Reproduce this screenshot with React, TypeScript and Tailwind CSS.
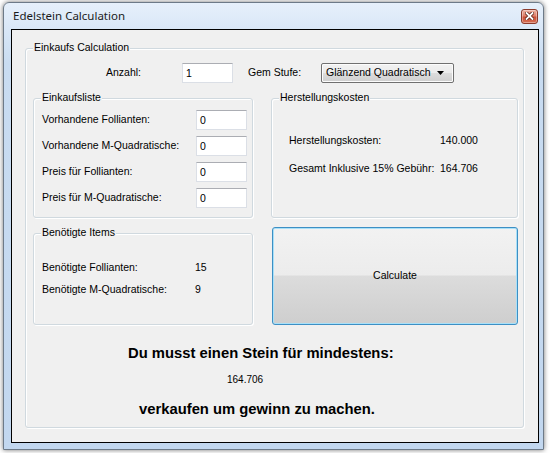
import React from "react";

function Group({
  title,
  className = "",
  children,
}: {
  title: string;
  className?: string;
  children?: React.ReactNode;
}) {
  return (
    <div
      className={`relative rounded-[3px] border border-[#d0d9df] shadow-[inset_1px_1px_0_#ffffff,1px_1px_0_#ffffff] ${className}`}
    >
      <span className="absolute left-[7px] top-[-8px] bg-[#f0f0f0] px-[1px] text-[10.5px] leading-[13px] text-black">
        {title}
      </span>
      {children}
    </div>
  );
}

function TextBox({ value, className = "" }: { value: string; className?: string }) {
  return (
    <div
      className={`h-[20px] border border-[#dbdfe6] border-t-[#abadb3] bg-white pl-[3px] text-[10.5px] leading-[18px] text-black ${className}`}
    >
      {value}
    </div>
  );
}

function CloseButton() {
  return (
    <div className="mr-[5px] flex h-[15px] w-[17px] items-center justify-center rounded-[3px] border border-[#8b3a2b] bg-[linear-gradient(to_bottom,#eeb2a2_0%,#df806a_45%,#cc4f36_55%,#d66f55_100%)] shadow-[inset_0_0_0_1px_rgba(255,255,255,0.35)]">
      <svg width="9" height="8" viewBox="0 0 9 8">
        <path
          d="M1.5 1 L7.5 7 M7.5 1 L1.5 7"
          stroke="#5a2318"
          strokeWidth="3.4"
          strokeLinecap="square"
        />
        <path
          d="M1.5 1 L7.5 7 M7.5 1 L1.5 7"
          stroke="#ffffff"
          strokeWidth="1.8"
          strokeLinecap="square"
        />
      </svg>
    </div>
  );
}

export default function App() {
  const einkaufsRows = [
    "Vorhandene Follianten:",
    "Vorhandene M-Quadratische:",
    "Preis für Follianten:",
    "Preis für M-Quadratische:",
  ];

  return (
    <div className="h-[453px] w-[550px] overflow-hidden bg-white pt-[2px] font-['Liberation_Sans',Arial,sans-serif] text-[10.5px] text-black">
      {/* Window */}
      <div className="ml-[3px] h-[448px] w-[541px] rounded-t-[6px] border border-[#6d7a88] bg-[linear-gradient(to_bottom,#e6f0fb_0px,#d9e7f7_26px,#c9dcf1_60px,#c2d7ef_100%)] shadow-[0_0_5px_rgba(0,0,0,0.55)]">
        {/* Title bar */}
        <div className="flex h-[26px] items-center">
          <span className="pl-[9px] font-['Noto_Sans',sans-serif] text-[11.5px] leading-[14px] text-[#1b1b1b]">
            Edelstein Calculation
          </span>
          <div className="ml-auto">
            <CloseButton />
          </div>
        </div>

        {/* Client area */}
        <div className="ml-[7px] h-[414px] w-[528px] border border-black bg-[#f0f0f0] pl-[13px] pt-[18px]">
          <Group title="Einkaufs Calculation" className="h-[380px] w-[499px]">
            {/* Top row */}
            <div className="mt-[14px] flex h-[20px] items-center">
              <div className="w-[156px] pl-[80px]">Anzahl:</div>
              <TextBox value="1" className="w-[51px]" />
              <div className="w-[88px] pl-[15px]">Gem Stufe:</div>
              <div className="flex h-[20px] w-[133px] items-center rounded-[2px] border border-[#707070] bg-[linear-gradient(to_bottom,#f2f2f2_0%,#ebebeb_50%,#dddddd_50%,#cfcfcf_100%)] pl-[4px] shadow-[inset_0_0_0_1px_#fcfcfc]">
                <span>Glänzend Quadratisch</span>
                <svg className="ml-auto mr-[9px]" width="7" height="4" viewBox="0 0 7 4">
                  <path d="M0 0 L7 0 L3.5 4 Z" fill="#000" />
                </svg>
              </div>
            </div>

            {/* Columns */}
            <div className="ml-[7px] mt-[15px] flex gap-[18px]">
              {/* Left column */}
              <div className="flex w-[220px] flex-col">
                <Group title="Einkaufsliste" className="h-[120px] w-[220px]">
                  <div className="flex flex-col gap-[6px] pl-[8px] pt-[11px]">
                    {einkaufsRows.map((r) => (
                      <div key={r} className="flex h-[20px] items-center">
                        <div className="w-[154px]">{r}</div>
                        <TextBox value="0" className="w-[51px]" />
                      </div>
                    ))}
                  </div>
                </Group>
                <Group title="Benötigte Items" className="mt-[15px] h-[92px] w-[220px]">
                  <div className="flex flex-col gap-[9px] pl-[8px] pt-[27px]">
                    <div className="flex h-[13px] items-center">
                      <div className="w-[153px]">Benötigte Follianten:</div>
                      <div>15</div>
                    </div>
                    <div className="flex h-[13px] items-center">
                      <div className="w-[153px]">Benötigte M-Quadratische:</div>
                      <div>9</div>
                    </div>
                  </div>
                </Group>
              </div>

              {/* Right column */}
              <div className="flex w-[247px] flex-col">
                <Group title="Herstellungskosten" className="h-[120px] w-[247px]">
                  <div className="flex flex-col gap-[15px] pl-[17px] pt-[35px]">
                    <div className="flex h-[13px] items-center">
                      <div className="w-[151px]">Herstellungskosten:</div>
                      <div>140.000</div>
                    </div>
                    <div className="flex h-[13px] items-center">
                      <div className="w-[151px]">Gesamt Inklusive 15% Gebühr:</div>
                      <div>164.706</div>
                    </div>
                  </div>
                </Group>
                <button className="ml-[1px] mt-[9px] h-[98px] w-[246px] rounded-[3px] border border-[#3d8fc4] bg-[linear-gradient(to_bottom,#f2f2f2_0%,#ececec_49%,#dcdcdc_50%,#cecece_100%)] font-['Liberation_Sans',Arial,sans-serif] text-[10.5px] text-black shadow-[inset_0_0_0_1px_#a8e0f8]">
                  Calculate
                </button>
              </div>
            </div>

            {/* Bottom texts */}
            <div className="ml-[102px] mt-[19px] text-[14.8px] font-bold leading-[18px]">
              Du musst einen Stein für mindestens:
            </div>
            <div className="ml-[201px] mt-[12px] text-[10px] leading-[12px]">164.706</div>
            <div className="ml-[113px] mt-[14px] text-[14.8px] font-bold leading-[18px]">
              verkaufen um gewinn zu machen.
            </div>
          </Group>
        </div>
      </div>
    </div>
  );
}
